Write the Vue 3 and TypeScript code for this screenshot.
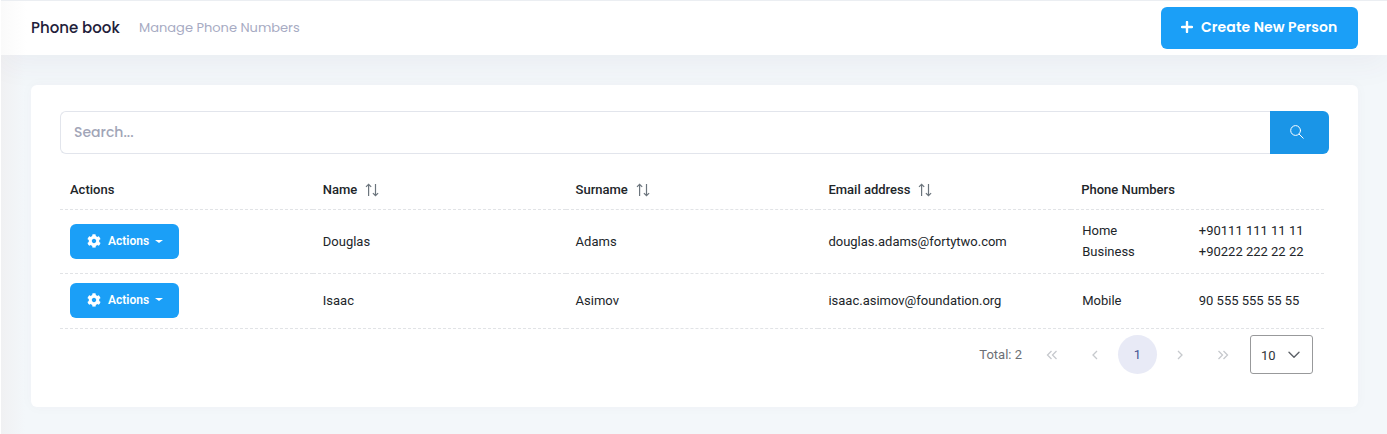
<script setup lang="ts">
interface Phone { type: string; number: string }
interface Person { name: string; surname: string; email: string; phones: Phone[] }
interface Column { label: string; sortable: boolean }

const columns: Column[] = [
  { label: 'Actions', sortable: false },
  { label: 'Name', sortable: true },
  { label: 'Surname', sortable: true },
  { label: 'Email address', sortable: true },
  { label: 'Phone Numbers', sortable: false },
]

const people: Person[] = [
  {
    name: 'Douglas',
    surname: 'Adams',
    email: 'douglas.adams@fortytwo.com',
    phones: [
      { type: 'Home', number: '+90111 111 11 11' },
      { type: 'Business', number: '+90222 222 22 22' },
    ],
  },
  {
    name: 'Isaac',
    surname: 'Asimov',
    email: 'isaac.asimov@foundation.org',
    phones: [{ type: 'Mobile', number: '90 555 555 55 55' }],
  },
]
</script>

<template>
  <div class="page">
    <header class="subheader">
      <h1 class="title">Phone book</h1>
      <span class="subtitle">Manage Phone Numbers</span>
      <button class="create">
        <svg width="12" height="12" viewBox="0 0 12 12"><path d="M6 1v10M1 6h10" stroke="#fff" stroke-width="2.4" stroke-linecap="round" /></svg>
        <span class="create-text">Create New Person</span>
      </button>
    </header>

    <main class="card">
      <div class="search">
        <input class="search-input" type="text" placeholder="Search..." />
        <button class="search-button" aria-label="Search">
          <svg width="14" height="14" viewBox="0 0 14 14" fill="none" stroke="#fff" stroke-linecap="round"><circle cx="5.6" cy="5.5" r="4.9" /><path d="M9.200 9.200l4 4" /></svg>
        </button>
      </div>

      <table class="grid">
        <thead>
          <tr>
            <th v-for="column in columns" :key="column.label">
              <div class="head">
                <span>{{ column.label }}</span>
                <svg v-if="column.sortable" width="14" height="14" viewBox="0 0 14 14" fill="none" stroke="#6c757d" stroke-width="1.2"><path d="M3.600 13V1.400M1 3.900l2.600-2.600 2.600 2.600M10.500 1v11.600M7.900 10.100l2.600 2.600 2.600-2.600" /></svg>
              </div>
            </th>
          </tr>
        </thead>
        <tbody>
          <tr v-for="(person, index) in people" :key="person.email" :class="index === 0 ? 'tall' : 'short'">
            <td>
              <button class="actions">
                <svg width="14" height="14" viewBox="0 0 512 512" fill="#fff"><path d="M487.400 315.700l-42.600-24.600c4.300-23.200 4.300-47 0-70.200l42.600-24.600c4.900-2.800 7.100-8.600 5.500-14-11.100-35.600-30-67.800-54.700-94.600-3.800-4.100-10-5.100-14.800-2.300L380.800 110c-17.900-15.400-38.500-27.300-60.800-35.100V25.800c0-5.600-3.900-10.500-9.400-11.700-36.700-8.200-74.300-7.800-109.200 0-5.500 1.200-9.400 6.100-9.400 11.700V75c-22.200 7.900-42.800 19.800-60.800 35.100L88.700 85.500c-4.900-2.800-11-1.900-14.800 2.300-24.700 26.700-43.600 58.900-54.700 94.600-1.700 5.400.6 11.200 5.500 14L67.300 221c-4.300 23.200-4.300 47 0 70.200l-42.600 24.600c-4.900 2.800-7.100 8.600-5.500 14 11.100 35.600 30 67.800 54.700 94.600 3.800 4.100 10 5.100 14.800 2.300l42.600-24.600c17.900 15.400 38.500 27.300 60.800 35.100v49.200c0 5.600 3.900 10.500 9.400 11.700 36.700 8.200 74.300 7.800 109.200 0 5.500-1.200 9.400-6.100 9.400-11.700v-49.200c22.200-7.900 42.800-19.800 60.800-35.100l42.600 24.600c4.900 2.800 11 1.900 14.800-2.300 24.700-26.700 43.600-58.900 54.700-94.600 1.500-5.500-.7-11.300-5.600-14.100zM256 336c-44.100 0-80-35.900-80-80s35.900-80 80-80 80 35.900 80 80-35.900 80-80 80z" /></svg>
                <span>Actions</span>
                <i class="caret"></i>
              </button>
            </td>
            <td>{{ person.name }}</td>
            <td>{{ person.surname }}</td>
            <td>{{ person.email }}</td>
            <td>
              <div v-for="phone in person.phones" :key="phone.number" class="phone">
                <span>{{ phone.type }}</span>
                <span>{{ phone.number }}</span>
              </div>
            </td>
          </tr>
        </tbody>
      </table>

      <nav class="pager">
        <span class="total">Total: 2</span>
        <span class="step"><svg width="12" height="10" viewBox="0 0 12 10"><path d="M5.500 1L1.500 5l4 4M10.500 1l-4 4 4 4" /></svg></span>
        <span class="step"><svg width="6" height="10" viewBox="0 0 6 10"><path d="M5 1L1 5l4 4" /></svg></span>
        <span class="current">1</span>
        <span class="step"><svg width="6" height="10" viewBox="0 0 6 10"><path d="M1 1l4 4-4 4" /></svg></span>
        <span class="step"><svg width="12" height="10" viewBox="0 0 12 10"><path d="M1.500 1l4 4-4 4M6.500 1l4 4-4 4" /></svg></span>
        <button class="size">
          <span>10</span>
          <svg width="12" height="8" viewBox="0 0 12 8" fill="none" stroke="#5c6167" stroke-width="1.4" stroke-linecap="round" stroke-linejoin="round"><path d="M1 1.200l5 5 5-5" /></svg>
        </button>
      </nav>
    </main>
  </div>
</template>

<style>
body { margin: 0; background: #fff; }
</style>

<style scoped>
* { box-sizing: border-box; }
.page {
  height: 434px;
  margin-left: 1px;
  overflow: hidden;
  border-top: 1px solid #ebeef2;
  background: linear-gradient(90deg, rgba(240, 240, 242, .9), rgba(243, 247, 250, 0) 24px), #f3f7fa;
  font-family: Roboto, sans-serif;
  font-size: 13px;
  color: #212529;
}
button { border: 0; padding: 0; font: inherit; color: inherit; }
.subheader {
  display: flex;
  align-items: center;
  height: 54px;
  padding: 0 29px 0 30px;
  background: linear-gradient(90deg, #fafafa, #fff 26px);
  box-shadow: 0 10px 30px 0 rgba(82, 63, 105, .05);
  font-family: Poppins, Inter, sans-serif;
}
.title {
  width: 108px;
  margin: 0;
  padding-bottom: 1px;
  font-size: 15px;
  font-weight: 500;
  color: #1e2039;
  white-space: nowrap;
}
.subtitle { font-size: 13px; color: #a7abc3; white-space: nowrap; }
.create {
  display: flex;
  align-items: center;
  width: 197px;
  height: 42px;
  margin-left: auto;
  padding-left: 20px;
  gap: 8px;
  border-radius: 6px;
  background: #1b9ff7;
  color: #fff;
  font-size: 14px;
  font-weight: 600;
  letter-spacing: .1px;
  white-space: nowrap;
}
.create svg, .create-text { margin-top: -2px; }
.card {
  height: 322px;
  margin: 30px 29px 0 30px;
  padding: 26px 29px 0;
  border-radius: 6px;
  background: #fff;
  box-shadow: 0 0 13px 0 rgba(82, 63, 105, .03);
  position: relative;
}
.search { display: flex; height: 43px; }
.search-input {
  flex: 1;
  min-width: 0;
  padding: 0 13px;
  border: 1px solid #e2e5ec;
  border-right: 0;
  border-radius: 6px 0 0 6px;
  outline: 0;
  background: #fff;
  font: 500 14px Poppins, Inter, sans-serif;
}
.search-input::placeholder { color: #a1a5b7; opacity: 1; }
.search-button {
  display: flex;
  align-items: center;
  justify-content: center;
  width: 59px;
  padding: 0 5px 1px 0;
  border-radius: 0 6px 6px 0;
  background: #1a95e7;
}
.grid { width: 1264px; margin-top: 16px; border-collapse: separate; border-spacing: 0; table-layout: fixed; }
th, td { padding: 0 10px; border-bottom: 1px dashed #e1e3e6; text-align: left; vertical-align: middle; }
th { height: 40px; font-weight: 500; }
.head { display: flex; align-items: center; gap: 8px; }
.tall td { height: 64px; }
.tall td:last-child { padding-bottom: 2px; }
.short td { height: 55px; padding-bottom: 2px; }
.actions {
  display: flex;
  align-items: center;
  width: 109px;
  height: 35px;
  padding: 0 0 1px 17px;
  border-radius: 6px;
  background: #1b9ff7;
  color: #fff;
  font-size: 12px;
  font-weight: 600;
}
.actions span { margin-left: 7px; }
.caret { margin-left: 6px; border: 4px solid transparent; border-top-color: #fff; border-bottom: 0; border-top-width: 3.5px; }
.phone { display: grid; grid-template-columns: 116.600px 1fr; padding-left: 1px; line-height: 21px; white-space: nowrap; }
.pager { display: flex; align-items: center; height: 39px; margin: 6px 16px 0 0; justify-content: flex-end; color: #6c6f75; }
.total { margin-right: 8px; }
.step { display: flex; align-items: center; justify-content: center; width: 43px; }
.step svg { fill: none; stroke: #c6c9cd; stroke-width: 1.3; }
.current { width: 39px; height: 39px; margin: 0 1px 0 2px; border-radius: 50%; background: #e8eaf6; color: #495694; line-height: 39px; text-align: center; }
.size {
  display: flex;
  align-items: center;
  width: 63px;
  height: 39px;
  margin-left: 6px;
  padding: 2px 11px 0 10px;
  gap: 12px;
  border: 1px solid #98999b;
  border-radius: 3px;
  background: #fff;
  color: #30353a;
}
.size svg { margin-top: -2px; }
</style>
